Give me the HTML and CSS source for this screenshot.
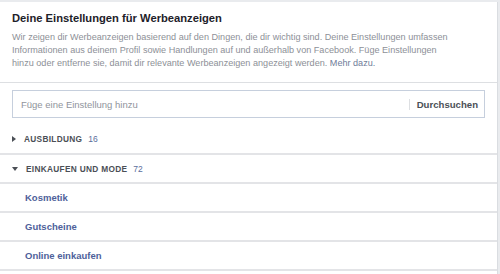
FILE: index.html
```html
<!DOCTYPE html>
<html lang="de">
<head>
<meta charset="utf-8">
<link rel="stylesheet" href="styles.css">
</head>
<body>
<div class="card">
  <div class="header">
    <div class="title">Deine Einstellungen für Werbeanzeigen</div>
    <p class="desc">Wir zeigen dir Werbeanzeigen basierend auf den Dingen, die dir wichtig sind. Deine Einstellungen umfassen<br>Informationen aus deinem Profil sowie Handlungen auf und außerhalb von Facebook. Füge Einstellungen<br>hinzu oder entferne sie, damit dir relevante Werbeanzeigen angezeigt werden. <a class="more">Mehr dazu.</a></p>
  </div>
  <div class="search-section">
    <div class="search">
      <span class="placeholder">Füge eine Einstellung hinzu</span>
      <span class="search-btn">Durchsuchen</span>
    </div>
    <div class="category first">
      <span class="tri tri-right"></span>
      <span class="cat-name">AUSBILDUNG</span>
      <span class="count">16</span>
    </div>
  </div>
  <div class="category row">
    <span class="tri tri-down"></span>
    <span class="cat-name">EINKAUFEN UND MODE</span>
    <span class="count">72</span>
  </div>
  <div class="item row">Kosmetik</div>
  <div class="item row">Gutscheine</div>
  <div class="item row">Online einkaufen</div>
</div>
</body>
</html>
```
FILE: styles.css
```css
html, body {
  margin: 0;
  padding: 0;
}
body {
  background: #e9ebee;
  font-family: "Liberation Sans", Arial, Helvetica, sans-serif;
  width: 500px;
  height: 274px;
  overflow: hidden;
}
.card {
  margin: 2px 2px 0 0;
  background: #fff;
  border-right: 1px solid #dadde1;
  height: 272px;
}
.header {
  padding: 10px 6px 0 12px;
  height: 70px;
  border-bottom: 1px solid #dddfe2;
}
.title {
  font-size: 11.2px;
  font-weight: bold;
  color: #1d2129;
  line-height: 13px;
}
.desc {
  margin: 6px 0 0 0;
  font-size: 9.1px;
  line-height: 13px;
  color: #8d9097;
}
.more {
  color: #6f7c99;
  font-weight: normal;
}
.search-section {
  padding: 7px 12px 0 12px;
  border-bottom: 2px solid #e3e4e7;
}
.search {
  height: 26px;
  border: 1px solid #c6cfdd;
  display: flex;
  align-items: center;
  justify-content: space-between;
  padding: 0 6px 0 8px;
}
.placeholder {
  font-size: 9.5px;
  color: #90949c;
}
.search-btn {
  font-size: 9.6px;
  font-weight: bold;
  color: #4b4f56;
  border-left: 1px solid #dddfe2;
  padding-left: 7px;
  line-height: 11px;
}
.category {
  display: flex;
  align-items: center;
  font-size: 8.3px;
  font-weight: bold;
  color: #4b4f56;
}
.category.first {
  padding-top: 7px;
  height: 28px;
}
.row {
  border-bottom: 2px solid #e3e4e7;
  height: 27px;
}
.category.row {
  padding-left: 12px;
}
.tri {
  width: 0;
  height: 0;
  margin-right: 8px;
}
.tri-right {
  border-top: 3.5px solid transparent;
  border-bottom: 3.5px solid transparent;
  border-left: 4px solid #4b4f56;
}
.tri-down {
  border-left: 3.5px solid transparent;
  border-right: 3.5px solid transparent;
  border-top: 4px solid #4b4f56;
}
.cat-name {
  letter-spacing: 0.3px;
}
.count {
  margin-left: 6px;
  font-weight: normal;
  color: #5a6e9b;
  font-size: 8.5px;
}
.item {
  display: flex;
  align-items: center;
  padding-left: 25px;
  font-size: 9.5px;
  font-weight: bold;
  color: #4e5f9a;
}
```
